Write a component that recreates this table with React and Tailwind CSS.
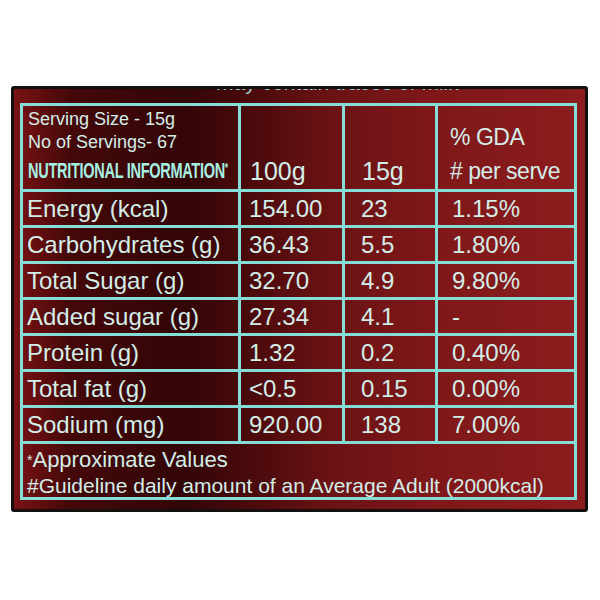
import React from "react";

const rows = [
  ["Energy (kcal)", "154.00", "23", "1.15%"],
  ["Carbohydrates (g)", "36.43", "5.5", "1.80%"],
  ["Total Sugar (g)", "32.70", "4.9", "9.80%"],
  ["Added sugar (g)", "27.34", "4.1", "-"],
  ["Protein (g)", "1.32", "0.2", "0.40%"],
  ["Total fat (g)", "<0.5", "0.15", "0.00%"],
  ["Sodium (mg)", "920.00", "138", "7.00%"],
];

export default function App() {
  return (
    <div className="w-[600px] h-[600px] bg-white pt-[86px] pl-[11px] font-['Liberation_Sans',Arial,sans-serif]">
      <div className="w-[577px] h-[426px] border-[3px] border-[#141010] rounded-[3px] pl-[6px] bg-[linear-gradient(90deg,#7a1214_0%,#440809_10%,#330607_30%,#4c0a0c_42%,#6a1214_55%,#7e1719_72%,#8c1c1e_100%)]">
        <div className="relative h-[14px] overflow-hidden">
          <div className="absolute left-[196px] top-[-18px] text-[21px] leading-[24px] text-[#9fd0ca] whitespace-nowrap">
            may contain traces of milk
          </div>
        </div>
        <div className="w-[557px] h-[397px] border-[3px] border-[#86ddd7] text-[#d3eee8]">
          <div className="flex h-[86px] border-b-[3px] border-[#86ddd7]">
            <div className="w-[218px] border-r-[3px] border-[#86ddd7] pl-[5px] pt-[2px]">
              <div className="text-[18px] leading-[23px]">Serving Size - 15g</div>
              <div className="text-[18px] leading-[23px]">No of Servings- 67</div>
              <div className="mt-[4px] text-[22px] leading-[26px] font-bold text-[#a6f0e2] whitespace-nowrap origin-left scale-x-[0.66] tracking-[-0.02em]">
                NUTRITIONAL INFORMATION<sup className="text-[13px]">*</sup>
              </div>
            </div>
            <div className="w-[104px] border-r-[3px] border-[#86ddd7] flex items-end pl-[9px] pb-[3px] text-[25px] leading-[30px]">
              100g
            </div>
            <div className="w-[93px] border-r-[3px] border-[#86ddd7] flex items-end pl-[17px] pb-[3px] text-[25px] leading-[30px]">
              15g
            </div>
            <div className="flex-1 flex flex-col pl-[12px] pt-[14px] text-[23px] leading-[34px] tracking-[-0.02em]">
              <div>% GDA</div>
              <div>
                # per serve
              </div>
            </div>
          </div>
          {rows.map((r) => (
            <div key={r[0]} className="flex h-[36px] border-b-[3px] border-[#86ddd7] text-[24px] leading-[33px]">
              <div className="w-[218px] border-r-[3px] border-[#86ddd7] pl-[4px] whitespace-nowrap">{r[0]}</div>
              <div className="w-[104px] border-r-[3px] border-[#86ddd7] pl-[8px]">{r[1]}</div>
              <div className="w-[93px] border-r-[3px] border-[#86ddd7] pl-[16px]">{r[2]}</div>
              <div className="flex-1 pl-[14px]">{r[3]}</div>
            </div>
          ))}
          <div className="h-[53px] pl-[4px] pt-[3px] text-[21px] leading-[26px] whitespace-nowrap">
            <div className="text-[22px]">
              <span className="text-[14px] align-top">*</span>Approximate Values
            </div>
            <div>#Guideline daily amount of an Average Adult (2000kcal)</div>
          </div>
        </div>
      </div>
    </div>
  );
}
